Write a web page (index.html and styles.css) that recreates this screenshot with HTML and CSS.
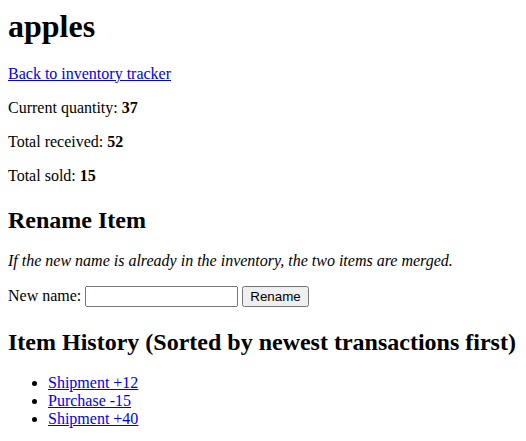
FILE: index.html
```html
<!DOCTYPE html>
<html lang="en">
<head>
    <meta charset="UTF-8">
    <title>apples</title>
    <link rel="stylesheet" href="styles.css">
</head>
<body>
    <h1 class="item-title">apples</h1>

    <p><a href="#">Back to inventory tracker</a></p>

    <p>Current quantity: <b>37</b></p>
    <p>Total received: <b>52</b></p>
    <p>Total sold: <b>15</b></p>

    <h2 class="section-title">Rename Item</h2>
    <p class="note"><i>If the new name is already in the inventory, the two items are merged.</i></p>

    <form class="rename-form">
        <label for="newName">New name:</label>
        <input type="text" id="newName" name="newName">
        <button type="submit">Rename</button>
    </form>

    <h2 class="section-title">Item History (Sorted by newest transactions first)</h2>
    <ul class="history">
        <li><a href="#">Shipment +12</a></li>
        <li><a href="#">Purchase -15</a></li>
        <li><a href="#">Shipment +40</a></li>
    </ul>
</body>
</html>
```

FILE: styles.css
```css
/* plain document look */
body {
    font-family: "Liberation Serif", "Times New Roman", serif;
    font-size: 16px;
    margin: 8px;
    color: #000;
    background: #fff;
}

.item-title {
    margin-top: 0;
    margin-bottom: 19.5px;
}

.section-title {
    margin-top: 22px;
    margin-bottom: 18px;
}

a {
    color: #0000ee;
}

.rename-form input {
    width: 145px;
    font-family: "Liberation Sans", Arial, sans-serif;
    font-size: 13.33px;
}

.rename-form button {
    font-family: "Liberation Sans", Arial, sans-serif;
    font-size: 13.33px;
}

.history {
    padding-left: 40px;
}
```
